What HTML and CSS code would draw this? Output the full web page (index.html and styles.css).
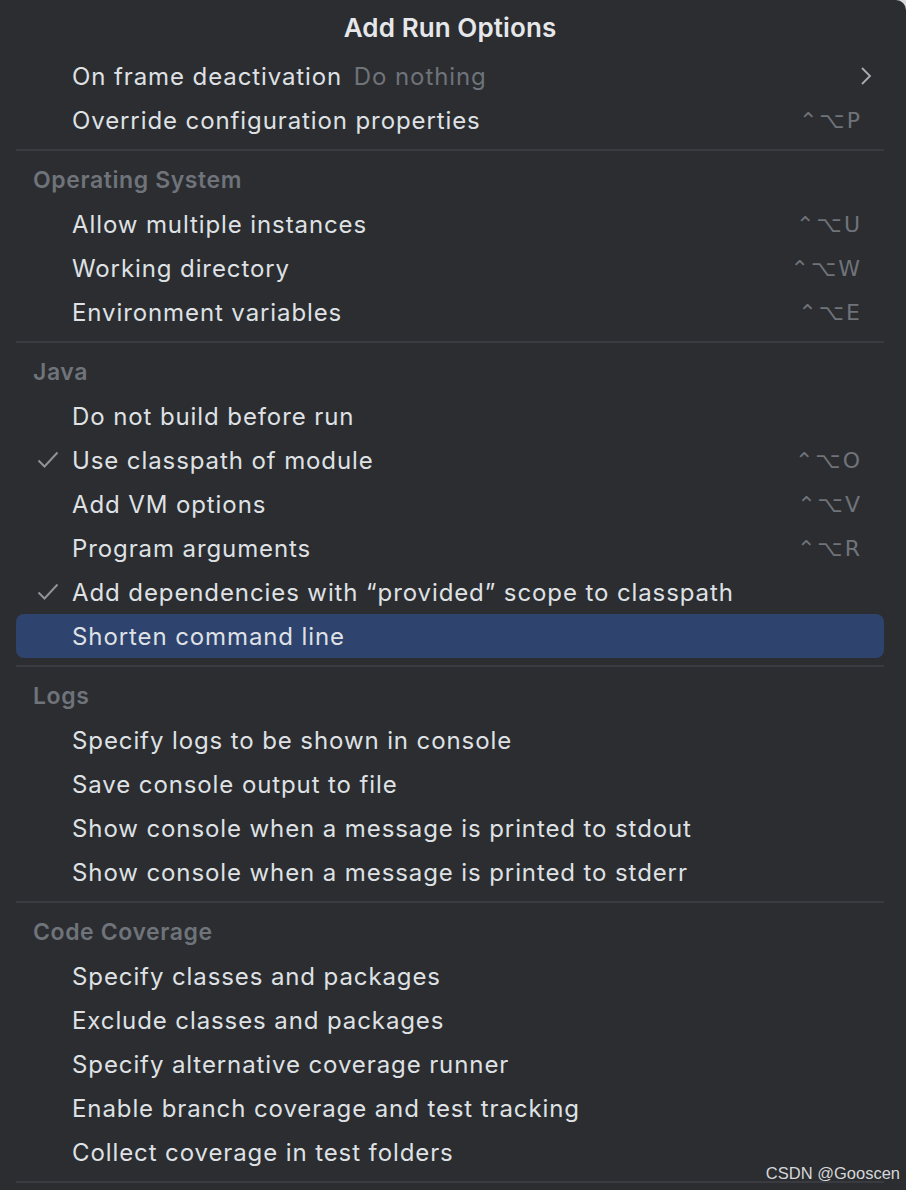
FILE: index.html
```html
<!DOCTYPE html>
<html lang="en">
<head>
    <meta charset="UTF-8">
    <title>Add Run Options</title>
    <link rel="stylesheet" href="styles.css">
</head>
<body>
    <div class="popup">
        <div class="title">Add Run Options</div>

        <div class="row">
            <span class="mark"></span>
            <span class="label">On frame deactivation <span class="hint">Do nothing</span></span>
            <svg class="chevron" width="12" height="20" viewBox="0 0 12 20"><path d="M2 2 L10 10 L2 18" fill="none" stroke="#a9acb1" stroke-width="1.8"/></svg>
        </div>
        <div class="row">
            <span class="mark"></span>
            <span class="label">Override configuration properties</span>
            <span class="keys">⌃⌥P</span>
        </div>

        <div class="sep"></div>
        <div class="group">Operating System</div>
        <div class="row">
            <span class="mark"></span>
            <span class="label">Allow multiple instances</span>
            <span class="keys">⌃⌥U</span>
        </div>
        <div class="row">
            <span class="mark"></span>
            <span class="label">Working directory</span>
            <span class="keys">⌃⌥W</span>
        </div>
        <div class="row">
            <span class="mark"></span>
            <span class="label">Environment variables</span>
            <span class="keys">⌃⌥E</span>
        </div>

        <div class="sep"></div>
        <div class="group">Java</div>
        <div class="row">
            <span class="mark"></span>
            <span class="label">Do not build before run</span>
        </div>
        <div class="row">
            <span class="mark"><svg width="22" height="18" viewBox="0 0 22 18"><path d="M1.5 9.5 L7.5 15.5 L20.5 1.5" fill="none" stroke="#8f9297" stroke-width="2"/></svg></span>
            <span class="label">Use classpath of module</span>
            <span class="keys">⌃⌥O</span>
        </div>
        <div class="row">
            <span class="mark"></span>
            <span class="label">Add VM options</span>
            <span class="keys">⌃⌥V</span>
        </div>
        <div class="row">
            <span class="mark"></span>
            <span class="label">Program arguments</span>
            <span class="keys">⌃⌥R</span>
        </div>
        <div class="row">
            <span class="mark"><svg width="22" height="18" viewBox="0 0 22 18"><path d="M1.5 9.5 L7.5 15.5 L20.5 1.5" fill="none" stroke="#8f9297" stroke-width="2"/></svg></span>
            <span class="label">Add dependencies with “provided” scope to classpath</span>
        </div>
        <div class="row selected">
            <span class="mark"></span>
            <span class="label">Shorten command line</span>
        </div>

        <div class="sep"></div>
        <div class="group">Logs</div>
        <div class="row">
            <span class="mark"></span>
            <span class="label">Specify logs to be shown in console</span>
        </div>
        <div class="row">
            <span class="mark"></span>
            <span class="label">Save console output to file</span>
        </div>
        <div class="row">
            <span class="mark"></span>
            <span class="label">Show console when a message is printed to stdout</span>
        </div>
        <div class="row">
            <span class="mark"></span>
            <span class="label">Show console when a message is printed to stderr</span>
        </div>

        <div class="sep"></div>
        <div class="group">Code Coverage</div>
        <div class="row">
            <span class="mark"></span>
            <span class="label">Specify classes and packages</span>
        </div>
        <div class="row">
            <span class="mark"></span>
            <span class="label">Exclude classes and packages</span>
        </div>
        <div class="row">
            <span class="mark"></span>
            <span class="label">Specify alternative coverage runner</span>
        </div>
        <div class="row">
            <span class="mark"></span>
            <span class="label">Enable branch coverage and test tracking</span>
        </div>
        <div class="row">
            <span class="mark"></span>
            <span class="label">Collect coverage in test folders</span>
        </div>
        <div class="sep"></div>

        <div class="watermark">CSDN @Gooscen</div>
    </div>
</body>
</html>
```

FILE: styles.css
```css
body {
    margin: 0;
    background-color: #d9d9db;
    font-family: 'Inter', 'DejaVu Sans', sans-serif;
}
.popup {
    position: relative;
    width: 906px;
    height: 1190px;
    overflow: hidden;
    background-color: #2b2d30;
    border-top-right-radius: 10px;
    color: #dfe1e5;
}
.title {
    height: 54px;
    line-height: 56px;
    text-align: center;
    font-size: 26px;
    font-weight: 600;
    color: #e6e7ea;
    letter-spacing: 0.1px;
    padding-right: 6px;
}
.row {
    display: flex;
    align-items: center;
    height: 44px;
    margin: 0 22px 0 16px;
    padding-right: 24px;
    border-radius: 8px;
    font-size: 24px;
    letter-spacing: 0.9px;
}
.row.selected {
    background-color: #2e436e;
}
.mark {
    width: 56px;
    flex-shrink: 0;
    display: flex;
    align-items: center;
    padding-left: 21px;
    box-sizing: border-box;
}
.mark svg {
    display: block;
}
.label {
    flex: 1;
    white-space: nowrap;
}
.hint {
    color: #6f737a;
    margin-left: 4px;
}
.keys {
    color: #6f737a;
    font-family: 'DejaVu Sans', sans-serif;
    font-size: 22px;
    letter-spacing: 2px;
    margin-right: -2px;
}
.chevron {
    margin-right: -12px;
}
.sep {
    height: 2px;
    margin: 7px 22px 7px 16px;
    background-color: #393b40;
}
.group {
    height: 44px;
    line-height: 44px;
    padding-left: 33px;
    font-size: 23px;
    font-weight: 600;
    letter-spacing: 0.6px;
    color: #6f737a;
}
.watermark {
    position: absolute;
    right: 6px;
    bottom: 7px;
    font-family: 'Liberation Sans', Arial, sans-serif;
    font-size: 16.5px;
    color: #d6d7d9;
}
```
